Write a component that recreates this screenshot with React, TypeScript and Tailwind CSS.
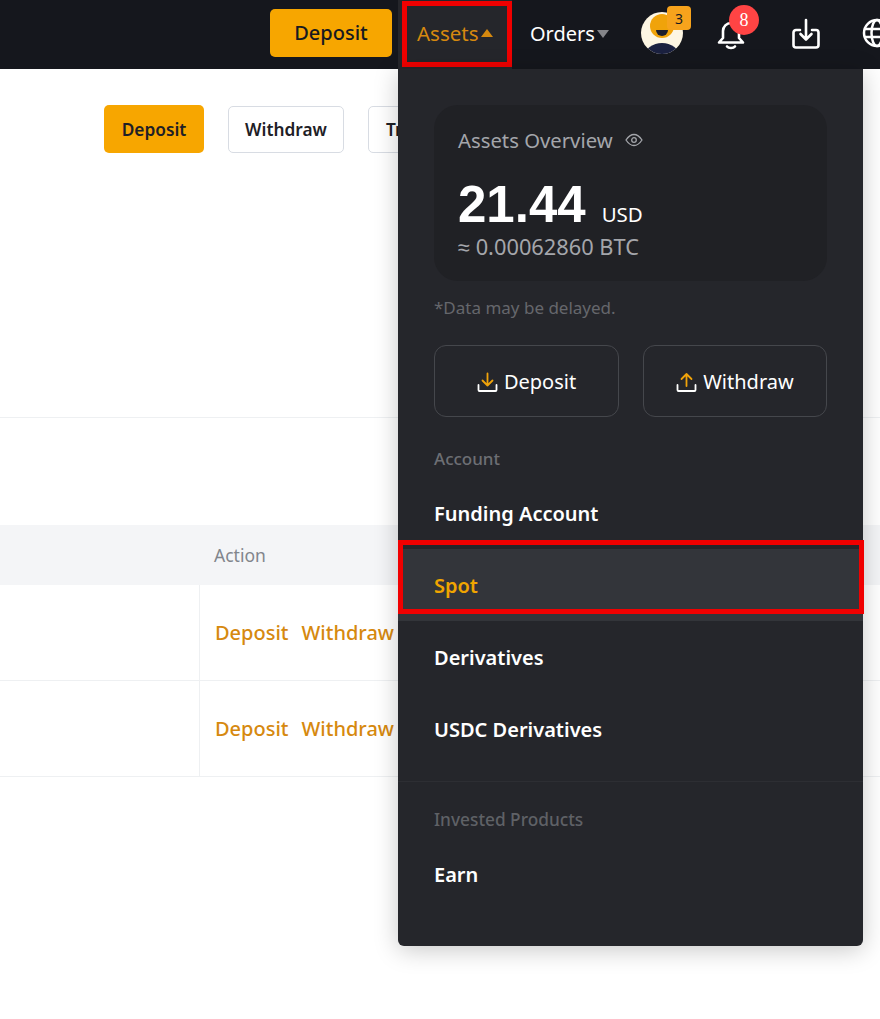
import React from "react";

const Caret = ({ up, color }: { up?: boolean; color: string }) => (
  <svg width="12" height="8" viewBox="0 0 12 8" className="ml-[2px]">
    <path d={up ? "M6 0 L12 8 L0 8 Z" : "M0 0 L12 0 L6 8 Z"} fill={color} />
  </svg>
);

const Avatar = () => (
  <svg width="42" height="42" viewBox="0 0 42 42">
    <defs>
      <clipPath id="av"><circle cx="21" cy="21" r="21" /></clipPath>
    </defs>
    <g clipPath="url(#av)">
      <rect width="42" height="42" fill="#fdf6e3" />
      <circle cx="21" cy="14" r="12" fill="#f0a30a" />
      <path d="M15 18 a6 6 0 0 0 12 0 Z" fill="#1b1e2e" />
      <ellipse cx="21" cy="44" rx="17" ry="13" fill="#1b2140" />
    </g>
  </svg>
);

const Bell = () => (
  <svg width="28" height="30" viewBox="0 0 28 30" fill="none" stroke="#fff" strokeWidth="2.600" strokeLinejoin="round" strokeLinecap="round">
    <path d="M6 18 V11 a8 8 0 0 1 16 0 V18 l4 4.500 H2 Z" />
    <path d="M10 26.500 a4.500 2.800 0 0 0 8 0" />
  </svg>
);

const DownloadBox = () => (
  <svg width="30" height="32" viewBox="0 0 30 32" fill="none" stroke="#fff" strokeWidth="2.600" strokeLinejoin="round" strokeLinecap="round">
    <path d="M9 12 H5 a2.500 2.500 0 0 0 -2.500 2.500 V27 a2.500 2.500 0 0 0 2.500 2.500 H25 a2.500 2.500 0 0 0 2.500 -2.500 V14.500 a2.500 2.500 0 0 0 -2.500 -2.500 H21" />
    <path d="M15 2 V21 M9.500 16 L15 21.500 L20.500 16" />
  </svg>
);

const Globe = () => (
  <svg width="30" height="30" viewBox="0 0 30 30" fill="none" stroke="#fff" strokeWidth="2.500" className="shrink-0">
    <circle cx="15" cy="15" r="13" />
    <ellipse cx="15" cy="15" rx="5.500" ry="13" />
    <path d="M2.500 11 H27.500 M2.500 19 H27.500" />
  </svg>
);

const Eye = () => (
  <svg width="18" height="14" viewBox="0 0 18 14" fill="none" stroke="#a4a6ab" strokeWidth="1.300">
    <path d="M1 7 C4 2.500 6.500 1.500 9 1.500 C11.500 1.500 14 2.500 17 7 C14 11.500 11.500 12.500 9 12.500 C6.500 12.500 4 11.500 1 7 Z" />
    <circle cx="9" cy="7" r="2.300" />
  </svg>
);

const TrayIcon = ({ up }: { up?: boolean }) => (
  <svg width="21" height="21" viewBox="0 0 21 21" fill="none" strokeWidth="1.800" strokeLinecap="round" strokeLinejoin="round">
    <path d="M1.500 13 V18 a1 1 0 0 0 1 1 H18.500 a1 1 0 0 0 1 -1 V13" stroke="#fff" />
    <path d={up ? "M10.500 14 V2 M5.500 7 L10.500 2 L15.500 7" : "M10.500 1.500 V13.500 M5.500 8.500 L10.500 13.500 L15.500 8.500"} stroke="#f0a30a" />
  </svg>
);

const MenuItem = ({ label, active }: { label: string; active?: boolean }) => (
  <div className={`h-[72px] flex items-center pl-9 pt-[2px] text-[20px] font-semibold ${active ? "bg-[#33353a] text-[#f0a500]" : "text-white"}`}>
    {label}
  </div>
);

const TableRow = () => (
  <div className="h-[96px] border-b border-[#eef0f2] flex">
    <div className="w-[200px] border-r border-[#eef0f2]" />
    <div className="pl-[15px] pt-[35px] flex gap-[13px] text-[20px] font-medium text-[#d6890f] leading-[26px]">
      <span>Deposit</span>
      <span>Withdraw</span>
    </div>
  </div>
);

export default function App() {
  return (
    <div className="relative w-[880px] h-[1019px] overflow-hidden bg-white font-['Noto_Sans',sans-serif]">
      {/* Top bar */}
      <header className="h-[69px] bg-[#15171d] flex items-center pl-[270px] overflow-hidden">
        <button className="shrink-0 w-[122px] h-[48px] -mt-[3px] rounded-[5px] bg-[#f7a600] text-[#181a20] text-[20px] font-medium">Deposit</button>
        <div className="shrink-0 ml-[6px] w-[114px] h-[69px] bg-[#25262b] pl-[4px] pt-[1px]">
          <div className="w-[110px] h-[66px] border-[5px] border-[#f00000] flex items-center pl-[10px] pb-[2px] text-[20.500px] text-[#d6890f]">
            Assets
            <Caret up color="#d6890f" />
          </div>
        </div>
        <div className="shrink-0 ml-[18px] w-[84px] -mt-[2px] flex items-center text-[20px] text-white">
          Orders
          <Caret color="#85868a" />
        </div>
        <div className="shrink-0 relative ml-[27px] w-[42px] h-[42px] -mt-[3px]">
          <Avatar />
          <span className="absolute -top-[6px] left-[26px] w-[24px] h-[24px] rounded-[4px] bg-[#f7a31c] text-[#181a20] text-[14px] flex items-center justify-center">3</span>
        </div>
        <div className="shrink-0 relative ml-[34px] w-[28px] h-[30px] mt-[1px]">
          <Bell />
          <span className="absolute -top-[15px] left-[12px] w-[30px] h-[30px] rounded-full bg-[#ff4444] text-white text-[18px] flex items-center justify-center font-['Liberation_Serif',serif]">8</span>
        </div>
        <div className="ml-[46px] -mt-[1px] shrink-0"><DownloadBox /></div>
        <div className="ml-[41px] -mt-[3px] shrink-0"><Globe /></div>
      </header>

      {/* Page */}
      <main>
        <div className="pt-[36px] pl-[104px] flex items-start gap-[24px] h-[349px] border-b border-[#eef0f2] text-[#1e2026] text-[17.300px] font-semibold">
          <button className="w-[100px] h-[48px] pt-[2px] rounded-[5px] bg-[#f7a600]">Deposit</button>
          <button className="w-[116px] h-[47px] mt-[1px] pt-[1px] rounded-[5px] border border-[#d8dce3] bg-white">Withdraw</button>
          <button className="w-[116px] h-[47px] mt-[1px] pt-[1px] rounded-[5px] border border-[#d8dce3] bg-white text-left pl-[17px]">Transfer</button>
        </div>
        <div className="mt-[107px] h-[60px] bg-[#f4f5f7] pl-[214px] flex items-center text-[17.500px] text-[#81858c]">Action</div>
        <TableRow />
        <TableRow />
      </main>

      {/* Assets dropdown */}
      <div className="absolute left-[398px] top-[69px] w-[465px] h-[877px] bg-[#25262b] rounded-b-[6px] shadow-[0_4px_24px_rgba(0,0,0,0.22)]">
        <div className="mx-9 mt-9 h-[176px] rounded-[24px] bg-[#202125] pl-6 pt-[21px]">
          <div className="flex items-center gap-3 text-[20.300px] leading-[28px] text-[#a4a6ab]">
            Assets Overview
            <Eye />
          </div>
          <div className="mt-[21px] flex items-baseline gap-4 text-white leading-[60px] h-[60px]">
            <span className="text-[51px] font-bold font-['Liberation_Sans',sans-serif]">21.44</span>
            <span className="text-[20.500px]">USD</span>
          </div>
          <div className="-mt-[1px] text-[21.800px] leading-[26px] text-[#a4a6ab]">≈ 0.00062860 BTC</div>
        </div>
        <div className="mx-9 mt-[15px] text-[17px] leading-[24px] text-[#65676c]">*Data may be delayed.</div>
        <div className="mx-9 mt-[25px] flex gap-6">
          <button className="w-[185px] h-[72px] pt-[2px] rounded-[12px] border border-[#45474c] flex items-center justify-center gap-[6px] text-[20px] text-white"><TrayIcon />Deposit</button>
          <button className="w-[184px] h-[72px] pt-[2px] rounded-[12px] border border-[#45474c] flex items-center justify-center gap-[6px] text-[20px] text-white"><TrayIcon up />Withdraw</button>
        </div>
        <div className="mx-9 mt-[29px] h-[26px] text-[17px] leading-[26px] font-medium text-[#6d6f74]">Account</div>
        <div className="mt-[5px]">
          <MenuItem label="Funding Account" />
          <MenuItem label="Spot" active />
          <MenuItem label="Derivatives" />
          <MenuItem label="USDC Derivatives" />
        </div>
        <div className="mt-[16px] border-t border-[#2d2e33] pt-[25px]">
          <div className="mx-9 h-[26px] text-[17.300px] leading-[26px] font-medium text-[#5f6166]">Invested Products</div>
          <div className="mt-[5px]"><MenuItem label="Earn" /></div>
        </div>
      </div>

      {/* Annotation box around the Spot row */}
      <div className="absolute left-[398px] top-[540px] w-[466px] h-[74px] border-[5px] border-[#f00000] pointer-events-none" />
    </div>
  );
}
